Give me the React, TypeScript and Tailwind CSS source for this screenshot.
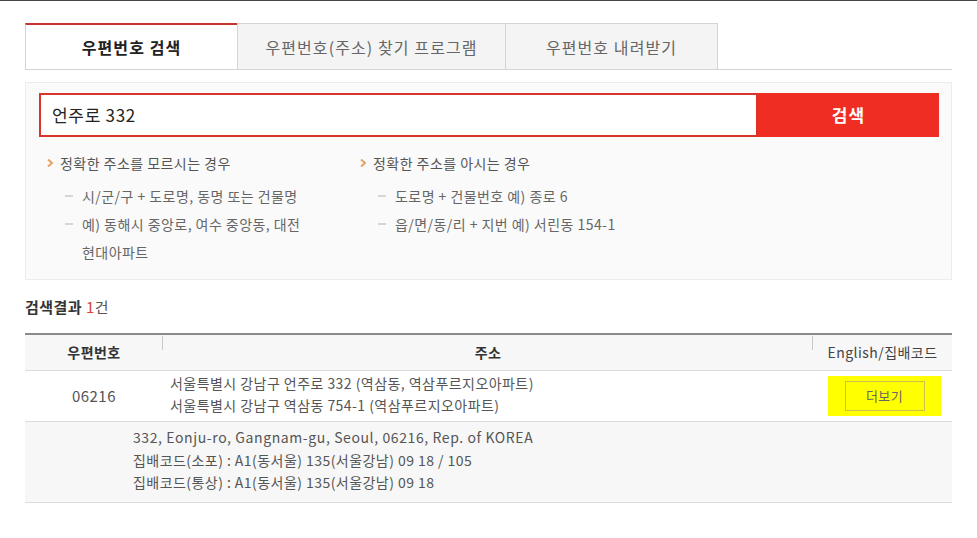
import React from 'react';

const font = { fontFamily: '"Noto Sans CJK KR", "Noto Sans", sans-serif' };

const Arrow = () => (
  <svg width="6" height="8" viewBox="0 0 6 8" className="shrink-0">
    <path d="M1 0.5 L5 4 L1 7.5" fill="none" stroke="#e3a566" strokeWidth="2" />
  </svg>
);

const Dash = () => <span className="inline-block w-[8px] h-[2px] bg-[#d5d5d5] shrink-0 mt-[13px]" />;

const Guide: React.FC<{ title: string; items: string[]; width: string; textWidth?: string }> = ({
  title,
  items,
  width,
  textWidth = '',
}) => (
  <div className={width}>
    <div className="flex items-center gap-[7px] h-[28px] text-[14px] text-[#555]">
      <Arrow />
      <span>{title}</span>
    </div>
    <ul className="mt-[5px]">
      {items.map((item) => (
        <li key={item} className="flex gap-[9px] pl-[18px] text-[14px] leading-[28px] text-[#666]">
          <Dash />
          <span className={textWidth}>{item}</span>
        </li>
      ))}
    </ul>
  </div>
);

export default function App() {
  return (
    <div className="w-[977px] h-[538px] bg-white border-t border-[#444] overflow-hidden tracking-[0.45px]" style={font}>
      <div className="px-[25px]">
        {/* Tabs */}
        <div className="mt-[22px] flex border-b border-[#d4d4d4] h-[47px] tracking-[1.1px]">
          <div className="w-[212px] flex items-center justify-center bg-white border-t-2 border-t-[#c8332d] border-l border-l-[#d4d4d4] text-[16px] font-bold text-[#222]">
            우편번호 검색
          </div>
          <div className="w-[268px] flex items-center justify-center bg-[#f4f4f4] border-t border-l border-[#d4d4d4] text-[16px] text-[#666]">
            우편번호(주소) 찾기 프로그램
          </div>
          <div className="w-[213px] flex items-center justify-center bg-[#f4f4f4] border-t border-l border-r border-[#d4d4d4] text-[16px] text-[#666]">
            우편번호 내려받기
          </div>
        </div>

        {/* Search panel */}
        <div className="mt-[12px] bg-[#fafafa] border border-[#ececec] pt-[10px] pl-[13px] pr-[12px] pb-[12px] h-[198px]">
          <div className="flex h-[44px]">
            <div className="flex-1 border-2 border-[#d9342c] bg-white flex items-center pl-[11px] text-[17px] text-[#222] tracking-[0.7px]">
              언주로 332
            </div>
            <button className="w-[181px] bg-[#ef2d22] text-white text-[17px] font-bold tracking-[1px]">검색</button>
          </div>
          <div className="flex pl-[8px] pt-[12px]">
            <Guide
              width="w-[313px]"
              textWidth="w-[230px]"
              title="정확한 주소를 모르시는 경우"
              items={['시/군/구 + 도로명, 동명 또는 건물명', '예) 동해시 중앙로, 여수 중앙동, 대전 현대아파트']}
            />
            <Guide
              width="w-[320px]"
              title="정확한 주소를 아시는 경우"
              items={['도로명 + 건물번호 예) 종로 6', '읍/면/동/리 + 지번 예) 서린동 154-1']}
            />
          </div>
        </div>

        {/* Result count */}
        <div className="mt-[17px] h-[20px] flex items-center text-[15px] text-[#333]">
          <span className="font-bold">검색결과</span>
          <span className="ml-[4px] text-[#dc4230]">1</span>
          <span className="text-[#555]">건</span>
        </div>

        {/* Result table */}
        <div className="mt-[16px] border-t-2 border-[#8a8a8a]">
          <div className="grid grid-cols-[138px_650px_139px] h-[36px] bg-[#f7f7f7] border-b border-[#dcdcdc] text-[14px]">
            <div className="relative flex items-center justify-center font-bold text-[#333]">
              우편번호
              <span className="absolute right-0 top-[1px] w-px h-[14px] bg-[#c8c8c8]" />
            </div>
            <div className="relative flex items-center justify-center font-bold text-[#333]">
              주소
              <span className="absolute right-0 top-[1px] w-px h-[14px] bg-[#c8c8c8]" />
            </div>
            <div className="flex items-center justify-center text-[#444]">English/집배코드</div>
          </div>

          <div className="grid grid-cols-[138px_650px_139px] h-[51px] border-b border-[#dcdcdc] text-[14px] text-[#555]">
            <div className="flex items-center justify-center text-[15px]">06216</div>
            <div className="flex flex-col justify-center pl-[7px] pb-[4px] leading-[22px]">
              <span>서울특별시 강남구 언주로 332 (역삼동, 역삼푸르지오아파트)</span>
              <span>서울특별시 강남구 역삼동 754-1 (역삼푸르지오아파트)</span>
            </div>
            <div className="flex items-center pl-[15px]">
              <div className="w-[113px] h-[40px] bg-[#ffff00] flex items-center justify-center">
                <button className="w-[80px] h-[30px] border border-[#c9c24a] text-[13px] text-[#666]">더보기</button>
              </div>
            </div>
          </div>

          <div className="bg-[#f7f7f7] border-b border-[#dcdcdc] h-[81px] pl-[108px] pt-[4px] text-[14px] leading-[22.5px] text-[#555]">
            <div className="tracking-[0.6px]">332, Eonju-ro, Gangnam-gu, Seoul, 06216, Rep. of KOREA</div>
            <div>집배코드(소포) : A1(동서울) 135(서울강남) 09 18 / 105</div>
            <div>집배코드(통상) : A1(동서울) 135(서울강남) 09 18</div>
          </div>
        </div>
      </div>
    </div>
  );
}
